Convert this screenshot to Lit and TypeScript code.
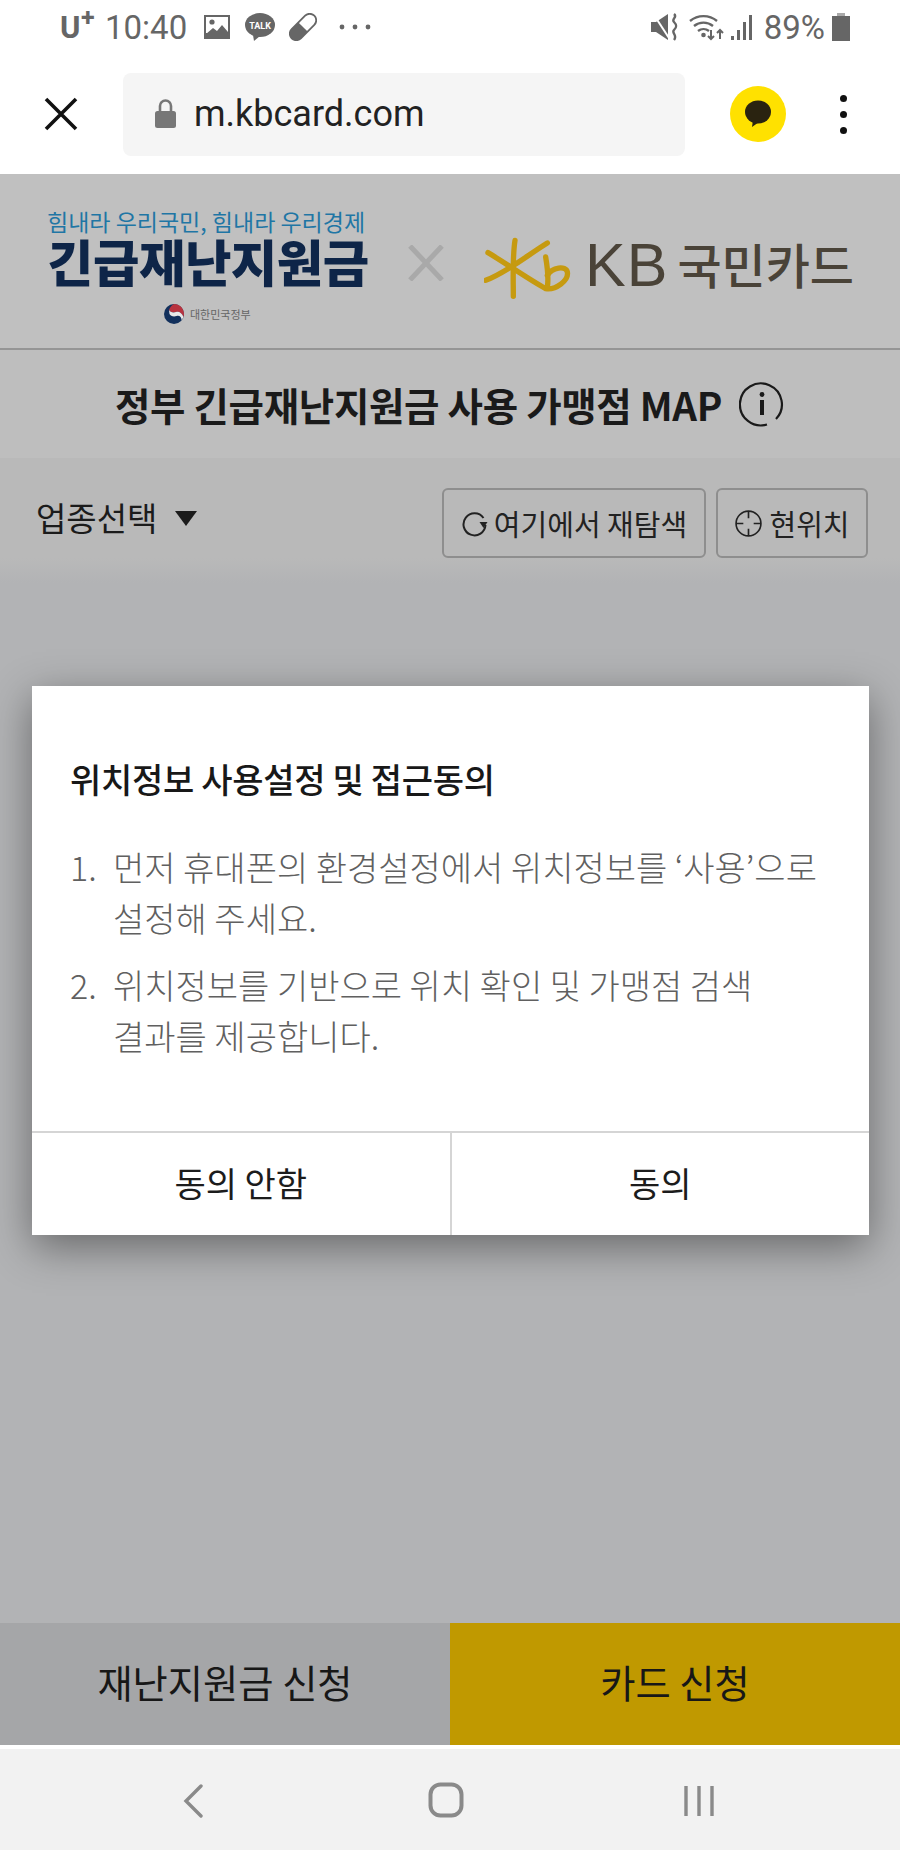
import { LitElement, html, css } from "lit";
import { customElement } from "lit/decorators.js";

@customElement("app-root")
export class AppRoot extends LitElement {
  static styles = css`
    :host { display: block; width: 900px; height: 1850px; overflow: hidden; background: #fff;
      font-family: "Noto Sans CJK KR", "Noto Sans", sans-serif; }
    .page { position: relative; width: 900px; height: 1850px; display: flex; flex-direction: column; }
    svg { display: block; flex: none; }

    .status { height: 54px; display: flex; align-items: center; padding: 0 50px 0 60px; color: #666;
      font-family: Roboto, sans-serif; font-size: 33px; }
    .uplus { font-weight: 700; font-size: 31px; position: relative; width: 38px; }
    .uplus sup { position: absolute; left: 21px; top: -4px; font-size: 25px; line-height: 1; }
    .time { margin-left: 7px; width: 92px; }
    .s-left { display: flex; align-items: center; }
    .i-group { display: flex; align-items: center; gap: 14px; margin-left: 6px; }
    .spacer { flex: 1; }
    .s-right { display: flex; align-items: center; }
    .pct { margin: 0 7px 0 10px; }

    .addr { height: 120px; display: flex; align-items: center; }
    .close { margin-left: 43px; }
    .urlbox { margin-left: 44px; width: 562px; height: 83px; background: #f5f5f5; border-radius: 8px;
      display: flex; align-items: center; padding-left: 32px; box-sizing: border-box; gap: 18px; }
    .url { font-family: Roboto, sans-serif; font-size: 36px; color: #222; line-height: 1; }
    .kakao { margin-left: 45px; width: 56px; height: 56px; border-radius: 50%; background: #ffe100;
      display: flex; align-items: center; justify-content: center; }
    .kebab { margin-left: 54px; display: flex; flex-direction: column; gap: 9px; }
    .kebab i { width: 7px; height: 7px; border-radius: 50%; background: #111; display: block; }

    .logos { height: 176px; background: #c0c0c0; border-bottom: 2px solid #959595; box-sizing: border-box; display: flex; }
    .gov { width: 340px; margin-left: 47px; display: flex; flex-direction: column; align-items: flex-start; }
    .slogan { margin-top: 32px; font-size: 23px; line-height: 30px; color: #1f76a5; white-space: nowrap; letter-spacing: 0; }
    .big { font-size: 50.5px; line-height: 48px; font-weight: 900; color: #0e2548; white-space: nowrap; letter-spacing: -0.5px; }
    .govmark { margin-top: 20px; margin-left: 117px; display: flex; align-items: center; gap: 6px; font-size: 11px; line-height: 20px; color: #666; white-space: nowrap; }
    .times { margin: 71px 0 0 21px; }
    .star { margin: 63px 0 0 40px; }
    .kb { margin: 61px 0 0 11px; font-family: "Liberation Sans", sans-serif; font-size: 61px; line-height: 60px; color: #4a4338; height: 60px; letter-spacing: 1px; }
    .kbk { margin: 59px 0 0 9px; font-size: 48px; line-height: 60px; font-weight: 500; color: #4a4338; white-space: nowrap; height: 60px; }

    .title { height: 108px; background: #bebebe; display: flex; align-items: center; justify-content: center; gap: 17px; }
    .title span { font-size: 38.5px; font-weight: 700; color: #1a1a1a; white-space: nowrap; letter-spacing: -0.33px; }

    .main { flex: 1; background: linear-gradient(#b9b9b9, #b9b9b9 100px, #b2b3b5 125px, #b2b3b5); display: flex; flex-direction: column; }
    .tools { display: flex; align-items: flex-start; padding: 30px 32px 0 36px; }
    .sel { display: flex; align-items: center; gap: 18px; font-size: 33px; line-height: 46px; color: #1b1b1b; margin-top: 6px; }
    .tri { width: 0; height: 0; border-left: 11px solid transparent; border-right: 11px solid transparent; border-top: 15px solid #1b1b1b; margin-top: 2px; }
    .btns { margin-left: auto; display: flex; gap: 10px; }
    .btn { height: 70px; box-sizing: border-box; border: 2px solid #8e8e8e; border-radius: 6px; display: flex; align-items: center; justify-content: center; gap: 6px;
      font-size: 29px; color: #222; white-space: nowrap; }
    .b1 { width: 264px; }
    .b2 { width: 152px; }

    .bottom { height: 122px; display: flex; }
    .bottom div { flex: 1; display: flex; align-items: center; justify-content: center; font-size: 38.3px; color: #171717; padding-bottom: 5px; }
    .bl { background: #a5a6a8; }
    .br { background: #c09900; }
    .stripe { height: 4px; background: #fff; }
    .nav { height: 101px; background: #f2f2f2; display: flex; align-items: flex-start; }
    .n1 { margin: 35px 0 0 182px; }
    .n2 { margin: 33px 0 0 224px; }
    .n3 { margin: 35px 0 0 219px; }

    .modal { position: absolute; left: 32px; top: 686px; width: 837px; height: 549px; background: #fff;
      box-shadow: 0 12px 40px rgba(0,0,0,.42); display: flex; flex-direction: column; }
    .mbody { flex: 1; padding: 68px 30px 0 38px; }
    .mtitle { font-size: 34px; line-height: 50px; font-weight: 500; color: #181818; letter-spacing: -0.3px; white-space: nowrap; }
    .li { display: grid; grid-template-columns: 43px 1fr; font-size: 34px; line-height: 51px; color: #606060; font-weight: 300; }
    ol { list-style: none; margin: 37px 0 0; padding: 0; display: flex; flex-direction: column; gap: 16px; }
    .li p { margin: 0; white-space: pre-line; }
    .mbtns { height: 102px; display: flex; border-top: 2px solid #d5d5d5; }
    .mbtns div { flex: 1; display: flex; align-items: center; justify-content: center; font-size: 34px; color: #1c1c1c; padding-bottom: 4px; }
    .mbtns div + div { border-left: 2px solid #d5d5d5; }
  `;

  render() {
    return html`<div class="page">
      <div class="status">
        <div class="s-left">
          <div class="uplus">U<sup>+</sup></div>
          <div class="time">10:40</div>
        </div>
        <div class="i-group">
          <svg width="28" height="26" viewBox="0 0 28 26"><rect x="1" y="1" width="26" height="24" fill="#666"/><rect x="3" y="3" width="22" height="16" fill="#fff"/><circle cx="9" cy="8" r="2.600" fill="#666"/><path d="M3 20l7-6 4 3 5-6 6 7v6H3z" fill="#666"/></svg>
          <svg width="30" height="28" viewBox="0 0 30 28"><ellipse cx="15" cy="12" rx="15" ry="12" fill="#666"/><path d="M8 22l1 6 6-5z" fill="#666"/><text x="15" y="15.500" text-anchor="middle" font-family="Roboto, sans-serif" font-weight="700" font-size="9" fill="#fff">TALK</text></svg>
          <svg width="28" height="28" viewBox="0 0 28 28"><g transform="rotate(-45 14 14)"><rect x="-2" y="7.500" width="32" height="13" rx="6.500" fill="#fff" stroke="#666" stroke-width="1.800"/><path d="M14 7.500H4.500a6.500 6.500 0 0 0 0 13H14z" fill="#666"/></g></svg>
          <svg style="margin-left:8px" width="32" height="6" viewBox="0 0 32 6"><circle cx="3" cy="3" r="2.400" fill="#666"/><circle cx="16" cy="3" r="2.400" fill="#666"/><circle cx="29" cy="3" r="2.400" fill="#666"/></svg>
        </div>
        <div class="spacer"></div>
        <div class="s-right">
          <svg width="28" height="28" viewBox="0 0 28 28"><path d="M0 9h5l12-8v26L5 19H0z" fill="#666"/><path d="M3 2l15 23" stroke="#fff" stroke-width="2"/><path d="M23 1c4 3-3 5 0 8s3 5 0 8 4 5 0 10" fill="none" stroke="#666" stroke-width="2.400"/></svg>
          <svg style="margin-left:10px" width="35" height="28" viewBox="0 0 35 28"><g fill="none" stroke="#666" stroke-width="2.400"><path d="M1 8a21 21 0 0 1 27 0"/><path d="M5 13a15 15 0 0 1 19 0"/><path d="M9 18a9 9 0 0 1 11 0"/></g><circle cx="14.500" cy="22" r="2.300" fill="#666"/><path d="M22 17v9m-3-3l3 3 3-3M31 26v-9m-3 3l3-3 3 3" fill="none" stroke="#666" stroke-width="2"/></svg>
          <svg style="margin-left:6px" width="24" height="28" viewBox="0 0 24 28"><g fill="#666"><rect x="1" y="23" width="3" height="4"/><rect x="7" y="17" width="3" height="10"/><rect x="13" y="9" width="3" height="18"/><rect x="19" y="2" width="3" height="25"/></g></svg>
          <div class="pct">89%</div>
          <svg width="18" height="28" viewBox="0 0 18 28"><rect x="5" y="0" width="8" height="4" fill="#aaa"/><rect x="0" y="3" width="18" height="25" fill="#666"/></svg>
        </div>
      </div>

      <div class="addr">
        <svg class="close" width="36" height="34" viewBox="0 0 36 34"><path d="M3 2l30 30M33 2L3 32" stroke="#111" stroke-width="3.600" fill="none"/></svg>
        <div class="urlbox">
          <svg width="21" height="30" viewBox="0 0 21 30"><path d="M5 13V7a5.500 5.500 0 0 1 11 0v6" fill="none" stroke="#777" stroke-width="2.600"/><rect x="0" y="12" width="21" height="17" rx="2.500" fill="#777"/></svg>
          <span class="url">m.kbcard.com</span>
        </div>
        <div class="kakao"><svg width="28" height="28" viewBox="0 0 28 28"><ellipse cx="14" cy="12" rx="13" ry="11.500" fill="#2a2310"/><path d="M9 20l-1 7 7-5z" fill="#2a2310"/></svg></div>
        <div class="kebab"><i></i><i></i><i></i></div>
      </div>

      <div class="logos">
        <div class="gov">
          <div class="slogan">힘내라 우리국민, 힘내라 우리경제</div>
          <div class="big">긴급재난지원금</div>
          <div class="govmark">
            <svg width="20" height="20" viewBox="0 0 20 20"><circle cx="10" cy="10" r="10" fill="#12305c"/><path d="M10 0a10 10 0 0 1 9.500 13C18 9 15 7 12 8 9 9 6 8 5 6 6 3 8 1 10 0z" fill="#b8333f"/><path d="M5 6c1 2 4 3 7 2s6 1 7.500 5c-.5 1-1 2-2 3 0-3-2-5-5-4s-6 0-7-2z" fill="#e8e8e8"/></svg>
            <span>대한민국정부</span>
          </div>
        </div>
        <svg class="times" width="36" height="36" viewBox="0 0 36 36"><path d="M2 1l32 34M34 1L2 35" stroke="#a9a9a9" stroke-width="5" fill="none"/></svg>
        <svg class="star" width="90" height="66" viewBox="0 0 270 198"><g fill="none" stroke="#c69a10" stroke-linecap="round" stroke-linejoin="round" stroke-width="16"><path d="M93 10C85 60 88 130 88 178"/><path d="M190 18C130 55 70 105 5 130"/><path d="M12 47C60 75 130 125 185 155C215 160 255 130 250 105C245 85 205 90 190 115"/><path d="M185 60C190 90 195 120 190 150"/></g></svg>
        <div class="kb">KB</div>
        <div class="kbk">국민카드</div>
      </div>

      <div class="title">
        <span>정부 긴급재난지원금 사용 가맹점 MAP</span>
        <svg width="46" height="46" viewBox="0 0 46 46"><path d="M28 43.500A21 21 0 1 1 37 38" fill="none" stroke="#1a1a1a" stroke-width="2.200"/><circle cx="23" cy="13.500" r="2.400" fill="#1a1a1a"/><rect x="21" y="19" width="4" height="15" fill="#1a1a1a"/></svg>
      </div>

      <div class="main">
        <div class="tools">
          <div class="sel"><span>업종선택</span><i class="tri"></i></div>
          <div class="btns">
            <div class="btn b1">
              <svg width="27" height="28" viewBox="0 0 26 28"><path d="M22 9A11 11 0 1 0 24 16" fill="none" stroke="#222" stroke-width="2"/><path d="M18 13h8l-4 6z" fill="#222"/></svg>
              <span>여기에서 재탐색</span>
            </div>
            <div class="btn b2">
              <svg width="29" height="29" viewBox="0 0 28 28"><circle cx="14" cy="14" r="12" fill="none" stroke="#222" stroke-width="1.600"/><path d="M14 2v7M14 19v7M2 14h7M19 14h7" stroke="#222" stroke-width="1.600"/></svg>
              <span>현위치</span>
            </div>
          </div>
        </div>
      </div>

      <div class="bottom">
        <div class="bl">재난지원금 신청</div>
        <div class="br">카드 신청</div>
      </div>
      <div class="stripe"></div>
      <div class="nav">
        <svg class="n1" width="22" height="34" viewBox="0 0 22 34"><path d="M19 2L4 17l15 15" fill="none" stroke="#8a8a8a" stroke-width="3.400" stroke-linecap="round"/></svg>
        <svg class="n2" width="36" height="36" viewBox="0 0 36 36"><rect x="2.500" y="2.500" width="31" height="31" rx="10" fill="none" stroke="#8a8a8a" stroke-width="4"/></svg>
        <svg class="n3" width="34" height="34" viewBox="0 0 34 34"><path d="M3 2v30M16 2v30M29 2v30" stroke="#8a8a8a" stroke-width="3.400" fill="none"/></svg>
      </div>

      <div class="modal">
        <div class="mbody">
          <div class="mtitle">위치정보 사용설정 및 접근동의</div>
          <ol>
            <li class="li"><span>1.</span><p>먼저 휴대폰의 환경설정에서 위치정보를 ‘사용’으로
설정해 주세요.</p></li>
            <li class="li"><span>2.</span><p>위치정보를 기반으로 위치 확인 및 가맹점 검색
결과를 제공합니다.</p></li>
          </ol>
        </div>
        <div class="mbtns"><div>동의 안함</div><div>동의</div></div>
      </div>
    </div>`;
  }
}
